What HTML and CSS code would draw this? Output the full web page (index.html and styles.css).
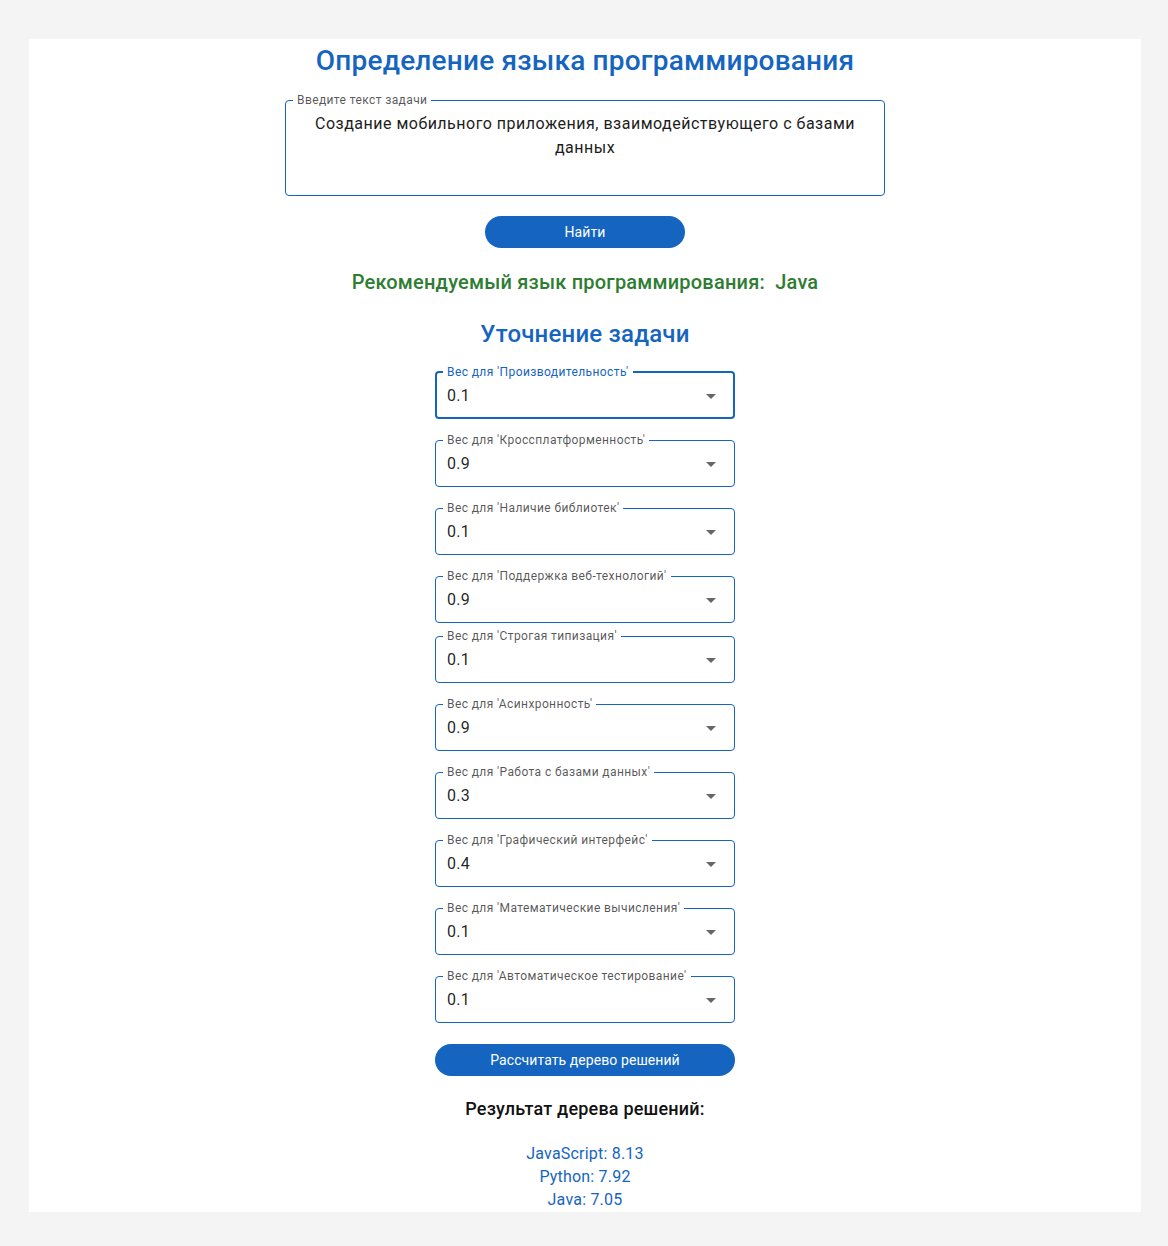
FILE: index.html
```html
<!DOCTYPE html>
<html lang="ru">
<head>
<meta charset="utf-8">
<title>Определение языка программирования</title>
<link rel="stylesheet" href="styles.css">
</head>
<body>
<main class="panel">
  <h1 class="title">Определение языка программирования</h1>

  <fieldset class="outlined task">
    <legend>Введите текст задачи</legend>
    <div class="task-text">Создание мобильного приложения, взаимодействующего с базами данных</div>
  </fieldset>

  <button class="btn btn-find">Найти</button>

  <p class="recommend">Рекомендуемый язык программирования:&nbsp; Java</p>

  <h2 class="subtitle">Уточнение задачи</h2>

  <div class="selects">
    <fieldset class="outlined select focused"><legend>Вес для 'Производительность'</legend><div class="select-row"><span>0.1</span><i class="arrow"></i></div></fieldset>
    <fieldset class="outlined select"><legend>Вес для 'Кроссплатформенность'</legend><div class="select-row"><span>0.9</span><i class="arrow"></i></div></fieldset>
    <fieldset class="outlined select"><legend>Вес для 'Наличие библиотек'</legend><div class="select-row"><span>0.1</span><i class="arrow"></i></div></fieldset>
    <fieldset class="outlined select"><legend>Вес для 'Поддержка веб-технологий'</legend><div class="select-row"><span>0.9</span><i class="arrow"></i></div></fieldset>
    <fieldset class="outlined select tight"><legend>Вес для 'Строгая типизация'</legend><div class="select-row"><span>0.1</span><i class="arrow"></i></div></fieldset>
    <fieldset class="outlined select"><legend>Вес для 'Асинхронность'</legend><div class="select-row"><span>0.9</span><i class="arrow"></i></div></fieldset>
    <fieldset class="outlined select"><legend>Вес для 'Работа с базами данных'</legend><div class="select-row"><span>0.3</span><i class="arrow"></i></div></fieldset>
    <fieldset class="outlined select"><legend>Вес для 'Графический интерфейс'</legend><div class="select-row"><span>0.4</span><i class="arrow"></i></div></fieldset>
    <fieldset class="outlined select"><legend>Вес для 'Математические вычисления'</legend><div class="select-row"><span>0.1</span><i class="arrow"></i></div></fieldset>
    <fieldset class="outlined select"><legend>Вес для 'Автоматическое тестирование'</legend><div class="select-row"><span>0.1</span><i class="arrow"></i></div></fieldset>
  </div>

  <button class="btn btn-calc">Рассчитать дерево решений</button>

  <h3 class="result-title">Результат дерева решений:</h3>
  <ul class="results">
    <li>JavaScript: 8.13</li>
    <li>Python: 7.92</li>
    <li>Java: 7.05</li>
  </ul>
</main>
</body>
</html>
```

FILE: styles.css
```css
* { box-sizing: border-box; }

body {
  margin: 0;
  background: #f4f4f4;
  font-family: Roboto, "Noto Sans", sans-serif;
  color: rgba(0, 0, 0, 0.87);
}

.panel {
  margin: 39px 27px 34px 29px;
  background: #ffffff;
  padding-top: 5px;
  display: flex;
  flex-direction: column;
  align-items: center;
  min-height: 1173px;
}

.title {
  margin: 0;
  font-size: 28px;
  line-height: 34px;
  font-weight: 500;
  letter-spacing: 0.2px;
  color: #1565c0;
}

.outlined {
  margin: 0;
  padding: 0;
  min-width: 0;
  border: 1px solid #1565c0;
  border-radius: 4px;
}

.outlined legend {
  margin-left: 7px;
  padding: 0 4px;
  font-size: 12px;
  line-height: 14px;
  color: rgba(0, 0, 0, 0.68);
  letter-spacing: 0.4px;
}

.task {
  width: 600px;
  margin-top: 15px;
}

.task-text {
  padding: 5px 20px 10px;
  min-height: 88px;
  text-align: center;
  font-size: 16px;
  line-height: 24px;
  letter-spacing: 0.5px;
  color: #1d1d1d;
}

.btn {
  border: none;
  background: #1565c0;
  color: #ffffff;
  font-family: Roboto, "Noto Sans", sans-serif;
  font-size: 14px;
  font-weight: 400;
  height: 32px;
  border-radius: 16px;
  cursor: pointer;
  letter-spacing: 0.08px;
}

.btn-find {
  width: 200px;
  margin-top: 20px;
}

.recommend {
  margin: 22px 0 0;
  font-size: 20px;
  line-height: 24px;
  font-weight: 500;
  letter-spacing: 0.2px;
  color: #2e7d32;
}

.subtitle {
  margin: 25px 0 0;
  font-size: 24px;
  line-height: 30px;
  font-weight: 500;
  letter-spacing: 0.2px;
  color: #1565c0;
}

.selects {
  margin-top: 16px;
  width: 300px;
  display: flex;
  flex-direction: column;
  gap: 14px;
}

.select-row {
  display: flex;
  align-items: center;
  justify-content: space-between;
  padding: 5px 18px 10px 11px;
  font-size: 16px;
  line-height: 24px;
  letter-spacing: 0.3px;
}

.select.focused {
  border-width: 2px;
}

.select.focused legend {
  margin-left: 6px;
  color: #1565c0;
}

.select.focused .select-row {
  padding: 5px 17px 9px 10px;
}

.select.tight {
  margin-top: -8px;
}

.arrow {
  width: 0;
  height: 0;
  border-left: 5px solid transparent;
  border-right: 5px solid transparent;
  border-top: 5px solid #666666;
}

.btn-calc {
  width: 300px;
  margin-top: 21px;
}

.result-title {
  margin: 22px 0 0;
  font-size: 18px;
  line-height: 22px;
  font-weight: 500;
  letter-spacing: 0.2px;
  color: #111111;
}

.results {
  list-style: none;
  margin: 22px 0 0;
  padding: 0;
  text-align: center;
  font-size: 16px;
  line-height: 23px;
  letter-spacing: 0.2px;
  color: #1565c0;
}
```
